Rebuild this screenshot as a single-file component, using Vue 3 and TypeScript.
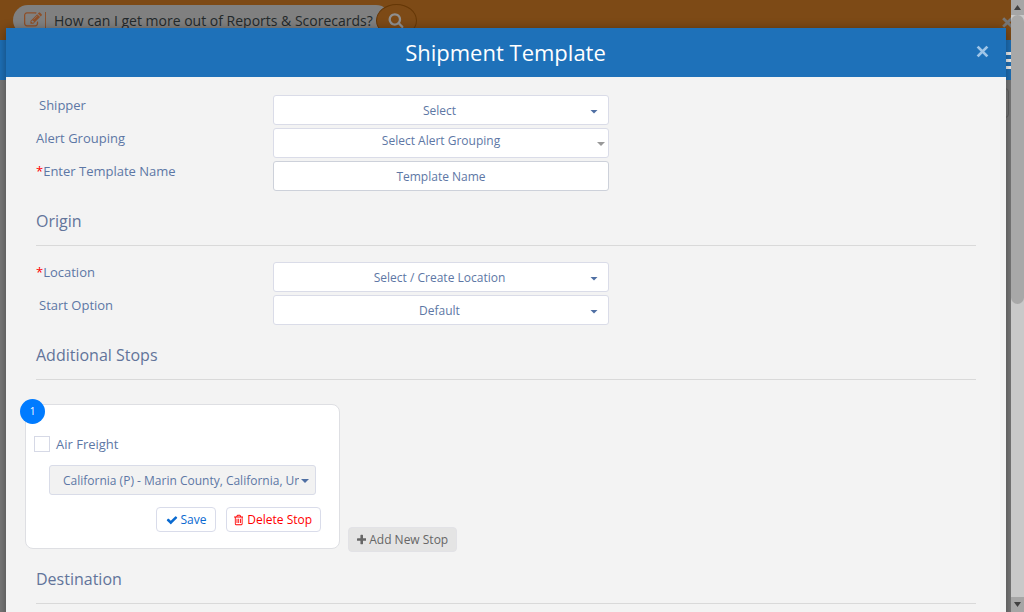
<script setup lang="ts">
interface Field {
  label: string
  text: string
  required?: boolean
  indent?: boolean
  kind: 'select' | 'multi' | 'input'
}

interface Section {
  title?: string
  fields: Field[]
}

const sections: Section[] = [
  {
    fields: [
      { label: 'Shipper', text: 'Select', indent: true, kind: 'select' },
      { label: 'Alert Grouping', text: 'Select Alert Grouping', kind: 'multi' },
      { label: 'Enter Template Name', text: 'Template Name', required: true, kind: 'input' },
    ],
  },
  {
    title: 'Origin',
    fields: [
      { label: 'Location', text: 'Select / Create Location', required: true, kind: 'select' },
      { label: 'Start Option', text: 'Default', indent: true, kind: 'select' },
    ],
  },
]
</script>

<template>
  <div class="screen">
    <header class="topbar">
      <div class="search">
        <svg class="edit" viewBox="0 0 1792 1792"><path d="M888 1184l116-116-152-152-116 116v56h96v96h56zm440-720q-16-16-33 1l-350 350q-17 17-1 33t33-1l350-350q17-17 1-33zm80 594v190q0 119-84.5 203.5t-203.5 84.5h-832q-119 0-203.5-84.5t-84.5-203.5v-832q0-119 84.5-203.5t203.5-84.5h832q63 0 117 25 15 7 18 23 3 17-9 29l-49 49q-14 14-32 8-23-6-45-6h-832q-66 0-113 47t-47 113v832q0 66 47 113t113 47h832q66 0 113-47t47-113v-126q0-13 9-22l64-64q15-15 35-7t20 29zm-96-738l288 288-672 672h-288v-288zm444 132l-92 92-288-288 92-92q28-28 68-28t68 28l152 152q28 28 28 68t-28 68z" /></svg>
        <span class="bar"></span>
        <span class="query">How can I get more out of Reports &amp; Scorecards?</span>
      </div>
      <div class="go">
        <svg viewBox="0 0 1792 1792"><path d="M1216 832q0-185-131.5-316.5t-316.5-131.5-316.5 131.5-131.5 316.5 131.5 316.5 316.5 131.5 316.5-131.5 131.5-316.5zm512 832q0 52-38 90t-90 38q-54 0-90-38l-343-342q-179 124-399 124-143 0-273.5-55.5t-225-150-150-225-55.5-273.5 55.5-273.5 150-225 225-150 273.5-55.5 273.5 55.5 225 150 150 225 55.5 273.5q0 220-124 399l343 343q37 37 37 90z" /></svg>
      </div>
      <svg class="bar-close" viewBox="0 0 12 12"><path d="M2 2L10 10M10 2L2 10" /></svg>
    </header>
    <div class="navbar"><div class="burger"><i></i><i></i><i></i></div></div>
    <div class="page"><div class="tab"></div></div>

    <div class="modal">
      <div class="modal-head">
        <h1>Shipment Template</h1>
        <svg class="close" viewBox="0 0 12 12"><path d="M1.5 1.5L10.5 10.5M10.5 1.5L1.5 10.5" /></svg>
      </div>
      <div class="modal-body">
        <template v-for="(s, i) in sections" :key="i">
          <h2 v-if="s.title">{{ s.title }}</h2>
          <div class="fields">
            <div v-for="f in s.fields" :key="f.label" class="row">
              <label :class="{ indent: f.indent }"><b v-if="f.required">*</b>{{ f.label }}</label>
              <div class="field" :class="f.kind">
                <span>{{ f.text }}</span>
                <i v-if="f.kind !== 'input'" class="caret"></i>
              </div>
            </div>
          </div>
        </template>

        <h2>Additional Stops</h2>
        <div class="stops">
          <div class="card">
            <span class="badge">1</span>
            <div class="air"><span class="box"></span><span>Air Freight</span></div>
            <div class="place">
              <span>California (P) - Marin County, California, United States</span>
              <i class="caret"></i>
            </div>
            <div class="actions">
              <button class="save">
                <svg viewBox="0 0 1792 1792"><path d="M1671 566q0 40-28 68l-724 724-136 136q-28 28-68 28t-68-28l-136-136-362-362q-28-28-28-68t28-68l136-136q28-28 68-28t68 28l294 295 656-657q28-28 68-28t68 28l136 136q28 28 28 68z" /></svg>
                <span>Save</span>
              </button>
              <button class="delete">
                <svg viewBox="192 0 1408 1792"><path d="M704 736v576q0 14-9 23t-23 9h-64q-14 0-23-9t-9-23v-576q0-14 9-23t23-9h64q14 0 23 9t9 23zm256 0v576q0 14-9 23t-23 9h-64q-14 0-23-9t-9-23v-576q0-14 9-23t23-9h64q14 0 23 9t9 23zm256 0v576q0 14-9 23t-23 9h-64q-14 0-23-9t-9-23v-576q0-14 9-23t23-9h64q14 0 23 9t9 23zm128 724v-948h-896v948q0 22 7 40.5t14.5 27 10.5 8.5h832q3 0 10.5-8.5t14.5-27 7-40.5zm-672-1076h448l-48-117q-7-9-17-11h-317q-10 2-17 11zm928 32v64q0 14-9 23t-23 9h-96v948q0 83-47 143.5t-113 60.5h-832q-66 0-113-58.5t-47-141.5v-952h-96q-14 0-23-9t-9-23v-64q0-14 9-23t23-9h309l70-167q15-37 54-63t79-26h320q40 0 79 26t54 63l70 167h309q14 0 23 9t9 23z" /></svg>
                <span>Delete Stop</span>
              </button>
            </div>
          </div>
          <button class="add">
            <svg viewBox="192 0 1408 1792"><path d="M1600 736v192q0 40-28 68t-68 28h-416v416q0 40-28 68t-68 28h-192q-40 0-68-28t-28-68v-416h-416q-40 0-68-28t-28-68v-192q0-40 28-68t68-28h416v-416q0-40 28-68t68-28h192q40 0 68 28t28 68v416h416q40 0 68 28t28 68z" /></svg>
            <span>Add New Stop</span>
          </button>
        </div>

        <h2>Destination</h2>
      </div>
    </div>

    <div class="scrollbar">
      <div class="cap"><i class="up"></i></div>
      <div class="thumb"></div>
      <div class="cap end"><i class="down"></i></div>
    </div>
  </div>
</template>

<style>
html, body { margin: 0; overflow: hidden; }
</style>

<style scoped>
* { box-sizing: border-box; }
.screen {
  position: relative;
  width: 1024px;
  height: 612px;
  overflow: hidden;
  background: #7a7a7a;
  font-family: "Open Sans", "Noto Sans", sans-serif;
  font-size: 13px;
  color: #5d77a5;
}
.topbar {
  height: 40px;
  display: flex;
  align-items: flex-start;
  background: #7d4a16;
}
.search {
  width: 378px;
  height: 30px;
  margin: 5px 0 0 13px;
  display: flex;
  align-items: center;
  border-radius: 15px;
  background: #808080;
}
.edit { width: 18px; height: 18px; margin-left: 11px; fill: #8e4f28; }
.bar { width: 1px; height: 16px; margin-left: 3px; background: #8a5330; }
.query {
  margin: 2px 0 0 8px;
  font-size: 14px;
  line-height: 30px;
  color: #23292b;
  white-space: nowrap;
}
.go {
  width: 41px;
  height: 33px;
  margin: 4px 0 0 -15px;
  display: flex;
  align-items: center;
  justify-content: center;
  border: 1px solid #653706;
  border-radius: 50%;
  background: #7d4a16;
}
.go svg { width: 16px; height: 16px; margin: 0 2px 1px 0; fill: #8f8f8f; }
.bar-close { width: 13px; height: 13px; margin: 16px 0 0 584px; }
.bar-close path { stroke: #777; stroke-width: 2.6; }
.navbar {
  height: 40px;
  padding: 12px 13px 0 0;
  display: flex;
  justify-content: flex-end;
  background: #1e71b9;
}
.burger { width: 18px; display: flex; flex-direction: column; gap: 4px; }
.burger i { height: 3px; background: #f2f2f2; }
.page { display: flex; justify-content: flex-end; padding: 8px 15px 0 0; }
.tab { width: 30px; height: 30px; border: 1px solid #626262; border-radius: 4px; }

.modal {
  position: absolute;
  left: 6px;
  top: 28px;
  width: 1000px;
  height: 600px;
  background: #f3f3f3;
  box-shadow: 0 2px 10px rgba(0, 0, 0, 0.4);
}
.modal-head {
  height: 49px;
  display: flex;
  align-items: center;
  padding: 0 17px 0 35px;
  background: #1e71b9;
}
h1 {
  flex: 1;
  margin: -2px 0 0 -6px;
  text-align: center;
  font-size: 22px;
  line-height: 30px;
  font-weight: 400;
  color: #fff;
}
.close { width: 13px; height: 13px; margin-top: -3px; }
.close path { stroke: #9fc5e7; stroke-width: 2.6; }
.modal-body { padding: 18px 30px 0; }
h2 {
  height: 55px;
  margin: 0 0 16px;
  padding-top: 17px;
  border-bottom: 1px solid #d9d9d9;
  font-size: 16px;
  line-height: 26px;
  font-weight: 400;
  color: #62749a;
}
.fields { display: flex; flex-direction: column; gap: 3px; }
.row { height: 30px; display: flex; align-items: flex-start; }
label { width: 237px; line-height: 20px; }
label.indent { padding-left: 3px; }
label b { font-weight: 400; color: #f00; }
.field {
  width: 336px;
  height: 30px;
  display: flex;
  align-items: center;
  border: 1px solid #dadce8;
  border-radius: 3px;
  background: #fff;
  font-size: 12px;
  line-height: 28px;
}
.field span { flex: 1; margin-top: 2px; text-align: center; }
.field.input { border-color: #cdd1da; }
.caret {
  flex: none;
  width: 8px;
  height: 4px;
  background: #4f6fa3;
  clip-path: polygon(0 0, 100% 0, 50% 100%);
}
.select .caret { margin: 3px 10px 0 0; }
.select span { padding-left: 15px; }
.multi .caret { margin: 2px 3px 0 0; background: #999; }
.multi span { padding-left: 11px; margin-top: -4px; }

.stops {
  height: 145px;
  margin: 24px 0 0 -11px;
  display: flex;
  align-items: flex-start;
}
h2:has(+ .stops) { margin-bottom: 24px; }
.card {
  position: relative;
  width: 315px;
  height: 145px;
  padding: 31px 18px 0 8px;
  border: 1px solid #dedfe3;
  border-radius: 8px;
  background: #fff;
}
.badge {
  position: absolute;
  left: -6px;
  top: -6px;
  width: 25px;
  height: 25px;
  border-radius: 50%;
  background: #007bff;
  color: #fff;
  font-size: 10px;
  line-height: 25px;
  text-align: center;
}
.air { height: 16px; display: flex; align-items: center; gap: 6px; }
.box { width: 16px; height: 16px; border: 1px solid #d6d9e6; background: #fff; }
.place {
  width: 267px;
  height: 30px;
  margin: 13px 0 0 15px;
  padding: 0 6px 0 13px;
  display: flex;
  align-items: center;
  gap: 2px;
  border: 1px solid #d9dce8;
  border-radius: 3px;
  background: #f2f2f2;
  font-size: 12px;
}
.place .caret { margin-top: 2px; }
.place span { flex: 1; overflow: hidden; white-space: nowrap; }
.actions { margin-top: 12px; display: flex; justify-content: flex-end; gap: 10px; }
button {
  height: 25px;
  padding: 0;
  display: flex;
  align-items: center;
  justify-content: center;
  gap: 3px;
  border: 1px solid #d9dcea;
  border-radius: 4px;
  background: #fff;
  font-family: inherit;
  font-size: 12px;
  white-space: nowrap;
}
button svg { height: 12px; fill: currentColor; }
.save { width: 60px; color: #0a6ad0; }
.delete { width: 95px; color: #f00; }
.delete svg { margin-right: 1px; margin-left: -1px; }
.add {
  width: 109px;
  margin: 123px 0 0 8px;
  border-color: #e2e2e6;
  background: #e4e4e4;
  color: #666;
}

.scrollbar {
  position: absolute;
  right: 0;
  top: 0;
  width: 13px;
  height: 612px;
  display: flex;
  flex-direction: column;
  background: #c9c9c9;
}
.cap {
  height: 15px;
  display: flex;
  align-items: center;
  justify-content: center;
  background: #a6a6a6;
}
.cap i { width: 7px; height: 5px; background: #404040; }
.cap .up { clip-path: polygon(50% 0, 100% 100%, 0 100%); }
.cap .down { clip-path: polygon(0 0, 100% 0, 50% 100%); }
.cap.end { margin-top: auto; }
.thumb { height: 289px; border-radius: 7px; background: #a8a8a8; }
</style>
